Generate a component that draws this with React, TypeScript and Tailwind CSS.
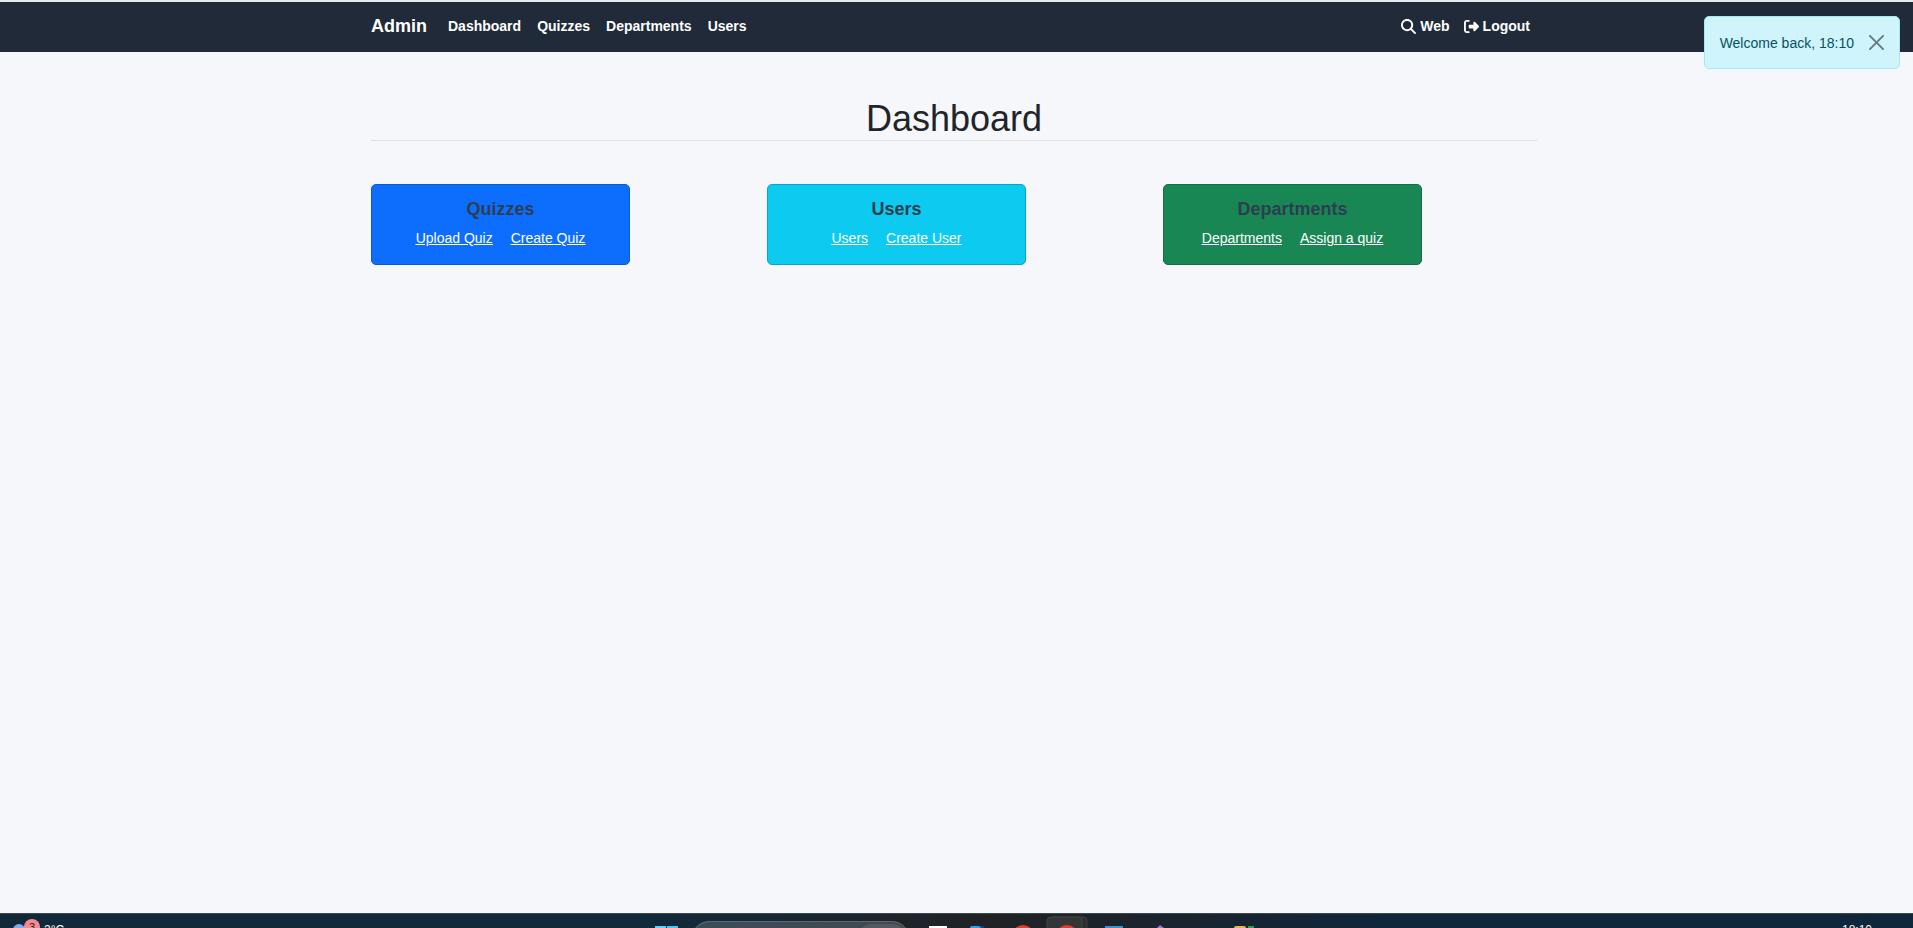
import React from "react";
import { FaMagnifyingGlass, FaRightFromBracket } from "react-icons/fa6";

const navLinks = ["Dashboard", "Quizzes", "Departments", "Users"];

const cards = [
  { title: "Quizzes", links: ["Upload Quiz", "Create Quiz"], color: "bg-[#0d6efd] border-[#0b5bd0]" },
  { title: "Users", links: ["Users", "Create User"], color: "bg-[#0dcaf0] border-[#0ba6c5]" },
  { title: "Departments", links: ["Departments", "Assign a quiz"], color: "bg-[#198754] border-[#156f45]" },
];

function Navbar() {
  return (
    <header className="border-t-2 border-[#e6e9ee] bg-[#212a38] pr-[5px]">
      <nav className="mx-auto flex h-[50px] max-w-[1188px] items-center px-[11px] pb-0.5 text-sm font-bold text-white">
        <a href="#" className="mr-[13px] text-lg">Admin</a>
        <ul className="flex flex-1">
          {navLinks.map((label) => (
            <li key={label}>
              <a href="#" className="block px-2">{label}</a>
            </li>
          ))}
        </ul>
        <a href="#" className="flex items-center gap-1 px-[7px]">
          <FaMagnifyingGlass aria-hidden="true" className="size-[15px]" />
          Web
        </a>
        <a href="#" className="flex items-center gap-1 px-[7px]">
          <FaRightFromBracket aria-hidden="true" className="size-[15px]" />
          Logout
        </a>
      </nav>
    </header>
  );
}

function Toast() {
  return (
    <div
      role="alert"
      className="absolute top-4 right-[13px] flex h-[53px] items-center gap-[15px] rounded-[5px] border border-[#9eeaf9] bg-[#cff4fc] px-[15px] text-sm text-[#055160]"
    >
      Welcome back, 18:10
      <button type="button" aria-label="Close" className="text-black opacity-50">
        <svg viewBox="0 0 16 16" className="size-[15px]" fill="currentColor">
          <path d="M.293.293a1 1 0 0 1 1.414 0L8 6.586 14.293.293a1 1 0 1 1 1.414 1.414L9.414 8l6.293 6.293a1 1 0 0 1-1.414 1.414L8 9.414l-6.293 6.293a1 1 0 0 1-1.414-1.414L6.586 8 .293 1.707a1 1 0 0 1 0-1.414z" />
        </svg>
      </button>
    </div>
  );
}

function Taskbar() {
  return (
    <footer className="h-[15px] overflow-hidden border-t border-[#3f4950] bg-linear-to-r from-[#12293a] from-35% via-[#202224] via-52% to-[#10263a] to-72%">
      <svg className="block h-[14px] w-full" viewBox="0 914 1913 14" preserveAspectRatio="xMidYMin slice">
        <circle cx="19" cy="930" r="6" fill="#86a9ec" />
        <circle cx="32" cy="927" r="8" fill="#f58a93" />
        <text x="29" y="931" fontSize="11" fill="#222">3</text>
        <text x="44" y="934" fontSize="12" fill="#fff">2°C</text>
        <rect x="655" y="926" width="11" height="10" fill="#5bd3fa" />
        <rect x="667" y="926" width="11" height="10" fill="#43c9f5" />
        <rect x="692" y="921.5" width="217" height="34" rx="17" fill="#fff" fillOpacity="0.17" stroke="#fff" strokeOpacity="0.25" />
        <rect x="859" y="924" width="46" height="26" rx="12" fill="#fff" fillOpacity="0.1" />
        <rect x="929" y="926" width="18" height="10" fill="#fff" />
        <path d="M970 928l1-2h9l2 2z" fill="#24a5e5" />
        <path d="M979 926h4l2 2h-4z" fill="#1238b5" />
        <circle cx="1023" cy="936" r="11" fill="#e33b2e" />
        <rect x="1051" y="917" width="36" height="24" rx="4" fill="#2d2e30" stroke="#3e4042" />
        <rect x="1047" y="917" width="35" height="24" rx="4" fill="#333537" stroke="#434547" />
        <circle cx="1067" cy="936" r="11" fill="#e33b2e" />
        <rect x="1105" y="926" width="18" height="10" fill="#3992d4" />
        <path d="M1157 928l3-3 4 3z" fill="#a276dc" />
        <rect x="1234" y="926" width="12" height="10" rx="2" fill="#eaaf50" />
        <rect x="1248" y="926" width="6" height="10" fill="#359a4b" />
        <text x="1842" y="934" fontSize="12" fill="#fff">18:10</text>
      </svg>
    </footer>
  );
}

export default function App() {
  return (
    <div className="relative flex min-h-screen flex-col bg-[#f5f7fb] font-['Liberation_Sans',Arial,sans-serif] text-[#212529]">
      <Navbar />
      <Toast />
      <main className="flex-1 pr-[5px]">
        <div className="mx-auto max-w-[1188px] px-[11px] pt-[46px]">
          <h1 className="border-b border-[#dee2e6] text-center text-4xl leading-[42px]">Dashboard</h1>
        </div>
        <div className="mx-auto grid max-w-[1188px] grid-cols-3 pt-[43px]">
          {cards.map((card) => (
            <div key={card.title} className="px-[11px]">
              <section className={`h-[81px] w-[259px] max-w-full rounded-[5px] border pt-[13px] text-center ${card.color}`}>
                <h2 className="text-lg leading-[22px] font-bold text-[#2c3e50]">{card.title}</h2>
                <div className="mt-2 flex justify-center gap-[18px] text-sm text-white underline">
                  {card.links.map((link) => (
                    <a key={link} href="#">{link}</a>
                  ))}
                </div>
              </section>
            </div>
          ))}
        </div>
      </main>
      <Taskbar />
    </div>
  );
}
